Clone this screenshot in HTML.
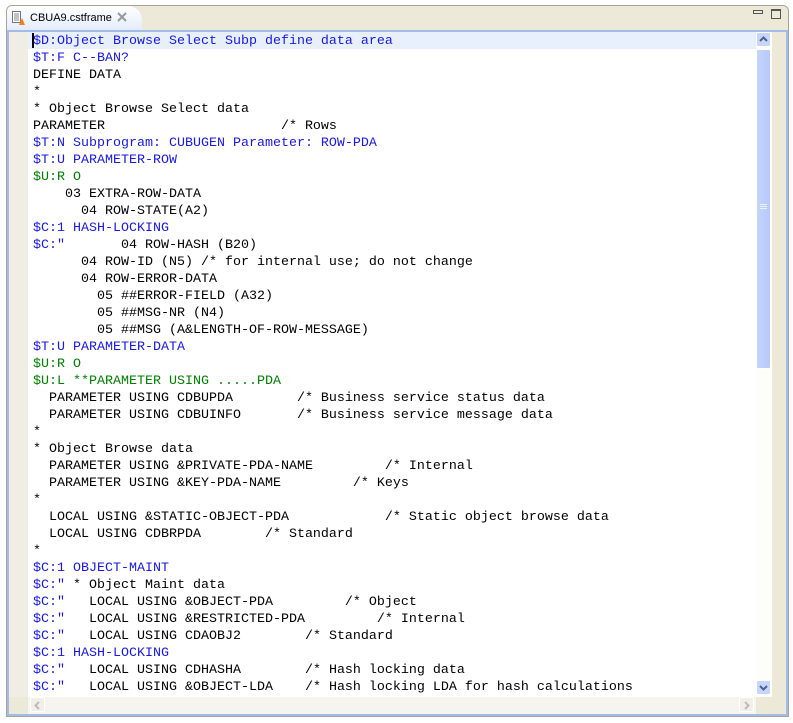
<!DOCTYPE html>
<html><head><meta charset="utf-8"><style>
html,body{margin:0;padding:0;width:793px;height:723px;background:#fff;overflow:hidden;position:relative;font-family:"Liberation Sans",sans-serif}
.frame{position:absolute;left:6px;top:5px;width:783px;height:712px;border:1px solid #a8a496;border-radius:6px 6px 0 0;background:#ece9d8;box-sizing:border-box}
.tab{position:absolute;left:7px;top:6px;width:135px;height:24px;background:linear-gradient(#fff,#e4ecfb);border-radius:5px 14px 0 0;}
.tab span{position:absolute;left:23px;top:6px;font-size:11px;color:#000}
.body{position:absolute;left:7px;top:30px;width:781px;height:686px;border:2px solid #a3bbe8;box-sizing:border-box;background:#ece9d8}
.ruler{position:absolute;left:9px;top:32px;width:19px;height:665px;background:#f0eee4}
.text{position:absolute;left:28px;top:32px;width:728px;height:665px;background:#fff;overflow:hidden}
.hl{position:absolute;left:28px;top:32px;width:728px;height:17px;background:#e8f0fe}
pre{position:absolute;left:33px;top:33px;margin:0;font-family:"Liberation Mono",monospace;font-size:13.33px;line-height:17px;color:#000}
.b{color:#1818e8}.g{color:#008000}
.vs{position:absolute;left:756px;top:32px;width:16px;height:665px;background:#fdfdfa}
.thumb{position:absolute;left:756px;top:49px;width:15px;height:320px;background:linear-gradient(90deg,#c4d4fd,#b6c9fb);border:1px solid #fff;border-radius:2px;box-sizing:border-box}
.btn{position:absolute;width:15px;height:15px;background:#c6d5fc;border:1px solid #fff;border-radius:2px;box-sizing:border-box}
.btn svg{position:absolute;left:2px;top:3px}
.hs{position:absolute;left:28px;top:697px;width:728px;height:17px;background:#f6f4ee}
.caret{position:absolute;left:32px;top:33px;width:2px;height:15px;background:#000}
</style></head><body>
<div class="frame"></div>
<div class="tab"><svg style="position:absolute;left:4px;top:4px" width="16" height="16"><rect x="1.5" y="1.5" width="8" height="11" fill="#fff" stroke="#777"/><path d="M3 4h5M3 6h5M3 8h5M3 10h5" stroke="#888"/><path d="M8 15l3-7 3 7z" fill="#f08020"/></svg><span>CBUA9.cstframe</span><svg style="position:absolute;left:110px;top:6px" width="10" height="10"><path d="M1 1l8 8M9 1l-8 8" stroke="#999" stroke-width="2"/></svg></div>
<div style="position:absolute;left:753px;top:10px;width:10px;height:4px;border:1px solid #555;box-sizing:border-box"></div>
<div style="position:absolute;left:771px;top:9px;width:10px;height:10px;border:1px solid #555;border-top-width:2px;box-sizing:border-box"></div>
<div class="body"></div>
<div class="ruler"></div>
<div class="text"></div>
<div class="hl"></div>
<div class="caret"></div>
<pre><span class="b">$D:Object Browse Select Subp define data area</span>
<span class="b">$T:F C--BAN?</span>
DEFINE DATA
*
* Object Browse Select data
PARAMETER                      /* Rows
<span class="b">$T:N Subprogram: CUBUGEN Parameter: ROW-PDA</span>
<span class="b">$T:U PARAMETER-ROW</span>
<span class="g">$U:R O</span>
    03 EXTRA-ROW-DATA
      04 ROW-STATE(A2)
<span class="b">$C:1 HASH-LOCKING</span>
<span class="b">$C:"</span>       04 ROW-HASH (B20)
      04 ROW-ID (N5) /* for internal use; do not change
      04 ROW-ERROR-DATA
        05 ##ERROR-FIELD (A32)
        05 ##MSG-NR (N4)
        05 ##MSG (A&amp;LENGTH-OF-ROW-MESSAGE)
<span class="b">$T:U PARAMETER-DATA</span>
<span class="g">$U:R O</span>
<span class="g">$U:L **PARAMETER USING .....PDA</span>
  PARAMETER USING CDBUPDA        /* Business service status data
  PARAMETER USING CDBUINFO       /* Business service message data
*
* Object Browse data
  PARAMETER USING &amp;PRIVATE-PDA-NAME         /* Internal
  PARAMETER USING &amp;KEY-PDA-NAME         /* Keys
*
  LOCAL USING &amp;STATIC-OBJECT-PDA            /* Static object browse data
  LOCAL USING CDBRPDA        /* Standard
*
<span class="b">$C:1 OBJECT-MAINT</span>
<span class="b">$C:"</span> * Object Maint data
<span class="b">$C:"</span>   LOCAL USING &amp;OBJECT-PDA         /* Object
<span class="b">$C:"</span>   LOCAL USING &amp;RESTRICTED-PDA         /* Internal
<span class="b">$C:"</span>   LOCAL USING CDAOBJ2        /* Standard
<span class="b">$C:1 HASH-LOCKING</span>
<span class="b">$C:"</span>   LOCAL USING CDHASHA        /* Hash locking data
<span class="b">$C:"</span>   LOCAL USING &amp;OBJECT-LDA    /* Hash locking LDA for hash calculations</pre>
<div class="vs"></div>
<div class="thumb"><svg style="position:absolute;left:3px;top:153px" width="8" height="8"><path d="M0 1.5h7M0 3.5h7M0 5.5h7" stroke="#eef2ff"/></svg></div>
<div class="btn" style="left:756px;top:32px"><svg width="9" height="7"><path d="M1 5l3.5-3.5L8 5" fill="none" stroke="#4d6185" stroke-width="2"/></svg></div>
<div class="btn" style="left:756px;top:680px"><svg width="9" height="7"><path d="M1 2l3.5 3.5L8 2" fill="none" stroke="#4d6185" stroke-width="2"/></svg></div>
<div class="hs"></div>
<div class="btn" style="left:30px;top:697px;background:#f1efe6"><svg width="9" height="9"><path d="M6 1L2.5 4.5 6 8" fill="none" stroke="#bbb" stroke-width="2"/></svg></div>
<div class="btn" style="left:739px;top:697px;background:#f1efe6"><svg width="9" height="9"><path d="M3 1l3.5 3.5L3 8" fill="none" stroke="#bbb" stroke-width="2"/></svg></div>
</body></html>
